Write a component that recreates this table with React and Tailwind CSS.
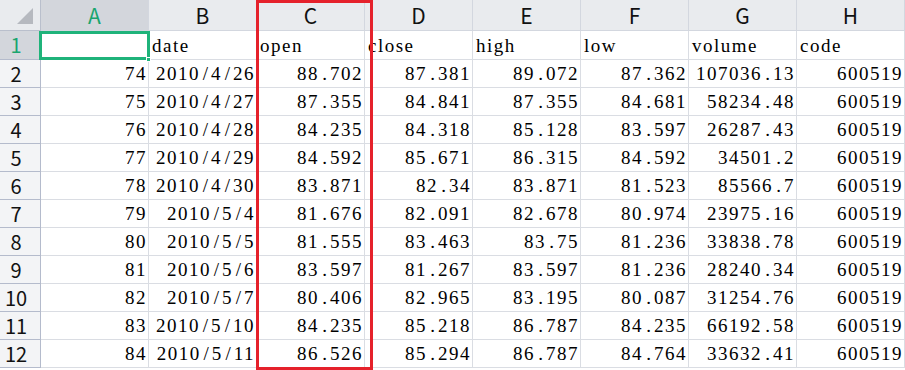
import React from "react";

const cols = ["A", "B", "C", "D", "E", "F", "G", "H"];
const header = ["", "date", "open", "close", "high", "low", "volume", "code"];
const rows = [
  ["74", "2010/4/26", "88.702", "87.381", "89.072", "87.362", "107036.13", "600519"],
  ["75", "2010/4/27", "87.355", "84.841", "87.355", "84.681", "58234.48", "600519"],
  ["76", "2010/4/28", "84.235", "84.318", "85.128", "83.597", "26287.43", "600519"],
  ["77", "2010/4/29", "84.592", "85.671", "86.315", "84.592", "34501.2", "600519"],
  ["78", "2010/4/30", "83.871", "82.34", "83.871", "81.523", "85566.7", "600519"],
  ["79", "2010/5/4", "81.676", "82.091", "82.678", "80.974", "23975.16", "600519"],
  ["80", "2010/5/5", "81.555", "83.463", "83.75", "81.236", "33838.78", "600519"],
  ["81", "2010/5/6", "83.597", "81.267", "83.597", "81.236", "28240.34", "600519"],
  ["82", "2010/5/7", "80.406", "82.965", "83.195", "80.087", "31254.76", "600519"],
  ["83", "2010/5/10", "84.235", "85.218", "86.787", "84.235", "66192.58", "600519"],
  ["84", "2010/5/11", "86.526", "85.294", "86.787", "84.764", "33632.41", "600519"],
];

const sans = "[font-family:Noto_Sans_CJK_SC,Noto_Sans,sans-serif]";
const serif = "[font-family:Liberation_Serif,Times_New_Roman,serif]";

function CellText({ value }) {
  const parts = [];
  let buf = "";
  [...value].forEach((ch, i) => {
    if (ch === "." || ch === "/") {
      if (buf) parts.push(buf);
      buf = "";
      parts.push(
        <span key={i} className="inline-block w-[11px] text-center tracking-normal">
          {ch}
        </span>
      );
    } else {
      buf += ch;
    }
  });
  if (buf) parts.push(buf);
  return <span className="whitespace-nowrap">{parts}</span>;
}

export default function App() {
  return (
    <div className="relative w-[905px] h-[370px] overflow-hidden bg-white">
      <div className="grid grid-cols-[41px_repeat(8,108px)]">
        {/* column header row */}
        <div className="relative h-[31px] bg-[#e9ebee] border-r border-b border-[#b9bfcc]">
          <svg className="absolute left-[17px] top-[8px]" width="16" height="16" viewBox="0 0 16 16">
            <polygon points="16,0 16,16 0,16" fill="#b6b9bf" />
          </svg>
        </div>
        {cols.map((c, i) => (
          <div
            key={c}
            className={`h-[31px] flex items-center justify-center border-r border-b border-[#d3d7df] text-[21px] leading-none ${sans} ${
              i === 0 ? "bg-[#d3d6dc] text-[#1aa56f]" : "bg-[#e9ebee] text-[#111]"
            }`}
          >
            {c}
          </div>
        ))}

        {/* row 1 */}
        <div className={`h-[29px] flex items-center justify-start border-r border-b border-[#b4bbcc] bg-[#d3d6dc] text-[#1aa56f] text-[20px] leading-none ${sans}`}>
          <span className="w-[32px] text-center">1</span>
        </div>
        {header.map((h, i) => (
          <div
            key={i}
            className={`h-[29px] flex items-end pb-[2px] pl-[3px] border-r border-b border-[#dadde3] text-[19px] leading-[22px] tracking-[1.5px] text-black ${serif}`}
          >
            {h}
          </div>
        ))}

        {rows.map((r, ri) => (
          <React.Fragment key={ri}>
            <div className={`h-[28px] flex items-center border-r border-b border-[#b4bbcc] bg-[#f3f4f6] text-[#111] text-[20px] leading-none ${sans}`}>
              <span className="w-[32px] text-center">{ri + 2}</span>
            </div>
            {r.map((v, ci) => (
              <div
                key={ci}
                className={`h-[28px] flex items-end justify-end pb-[2px] pr-[1px] border-r border-b border-[#dadde3] text-[19px] leading-[22px] tracking-[1.5px] text-black ${serif}`}
              >
                <CellText value={v} />
              </div>
            ))}
          </React.Fragment>
        ))}
      </div>

      {/* selection box on A1 */}
      <div className="absolute left-[39px] top-[31px] w-[111px] h-[29px] border-[3px] border-[#1fb37a]" />
      <div className="absolute left-[146px] top-[57px] w-[5px] h-[5px] bg-[#1fb37a] border border-white" />

      {/* red annotation box */}
      <div className="absolute left-[256px] top-[0px] w-[117px] h-[370px] border-[3px] border-[#e5212b]" />
    </div>
  );
}
